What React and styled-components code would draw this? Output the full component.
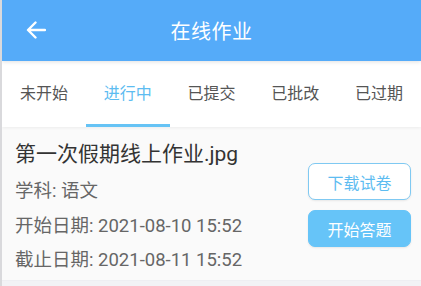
import React, { useState } from "react";
import styled, { createGlobalStyle } from "styled-components";

const GlobalStyle = createGlobalStyle`
  html, body {
    margin: 0;
    padding: 0;
    background: #f2f2f5;
    font-family: "Roboto", "Noto Sans CJK SC", sans-serif;
  }
`;

const tabs = ["未开始", "进行中", "已提交", "已批改", "已过期"];

export default function App() {
  const [active, setActive] = useState(1);

  return (
    <>
      <GlobalStyle />
      <Page>
        <Header>
          <BackButton type="button" aria-label="back">
            <svg width="20" height="18" viewBox="0 0 20 18" fill="none">
              <path
                d="M19 9H2.5M9.5 1.5L2 9l7.5 7.5"
                stroke="#fff"
                strokeWidth="2.4"
                strokeLinecap="round"
                strokeLinejoin="round"
              />
            </svg>
          </BackButton>
          <Title>在线作业</Title>
        </Header>

        <TabBar>
          {tabs.map((t, i) => (
            <Tab key={t} $active={i === active} onClick={() => setActive(i)}>
              {t}
            </Tab>
          ))}
        </TabBar>

        <Card>
          <Info>
            <FileName>第一次假期线上作业.jpg</FileName>
            <Line>学科: 语文</Line>
            <Line>开始日期: 2021-08-10 15:52</Line>
            <Line>截止日期: 2021-08-11 15:52</Line>
          </Info>
          <Actions>
            <ActionButton type="button">下载试卷</ActionButton>
            <ActionButton type="button" $primary>
              开始答题
            </ActionButton>
          </Actions>
        </Card>
      </Page>
    </>
  );
}

const Page = styled.div`
  box-sizing: border-box;
  width: 421px;
  height: 286px;
  overflow: hidden;
  background: #f2f2f5;
  border-left: 2px solid #d9d9dc;
`;

const Header = styled.div`
  position: relative;
  height: 61px;
  display: flex;
  align-items: center;
  justify-content: center;
  background-color: #55abf9;
  box-shadow: 0 1px 4px rgba(0, 0, 0, 0.12);
  z-index: 2;
`;

const BackButton = styled.button`
  position: absolute;
  left: 24px;
  top: 21px;
  padding: 0;
  border: none;
  background: transparent;
  display: flex;
`;

const Title = styled.h1`
  margin: 0;
  color: #fff;
  font-size: 20px;
  font-weight: 400;
  letter-spacing: 0.5px;
`;

const TabBar = styled.div`
  position: relative;
  display: grid;
  grid-template-columns: repeat(5, 1fr);
  height: 66px;
  background: #fff;
  box-shadow: 0 1px 3px rgba(0, 0, 0, 0.06);
  z-index: 1;
`;

const Tab = styled.div`
  display: flex;
  align-items: center;
  justify-content: center;
  padding-bottom: 2px;
  font-size: 16px;
  color: ${(p) => (p.$active ? "#5dbcf1" : "#555")};
  border-bottom: 3px solid ${(p) => (p.$active ? "#66c3f5" : "transparent")};
  box-sizing: border-box;
  cursor: pointer;
`;

const Card = styled.div`
  box-sizing: border-box;
  display: flex;
  align-items: flex-start;
  justify-content: space-between;
  height: 154px;
  padding: 12px 10px 0 13px;
  background: #fafafa;
  border-bottom: 1px solid #eeeef2;
`;

const Info = styled.div`
  display: flex;
  flex-direction: column;
`;

const FileName = styled.div`
  font-size: 21px;
  color: #333;
  line-height: 30px;
  margin-bottom: 5px;
`;

const Line = styled.div`
  font-size: 18.5px;
  color: #666;
  line-height: 34.5px;
`;

const Actions = styled.div`
  display: flex;
  flex-direction: column;
  gap: 10px;
  padding-top: 24px;
`;

const ActionButton = styled.button`
  width: 103px;
  height: 37px;
  border-radius: 7px;
  font-family: "Roboto", "Noto Sans CJK SC", sans-serif;
  font-size: 16px;
  border: 1px solid ${(p) => (p.$primary ? "#66c4f8" : "#7fc9f2")};
  background: ${(p) => (p.$primary ? "#66c4f8" : "#fff")};
  color: ${(p) => (p.$primary ? "#fff" : "#5dbcf1")};
  box-shadow: 0 1px 2px rgba(0, 0, 0, 0.08);
`;
